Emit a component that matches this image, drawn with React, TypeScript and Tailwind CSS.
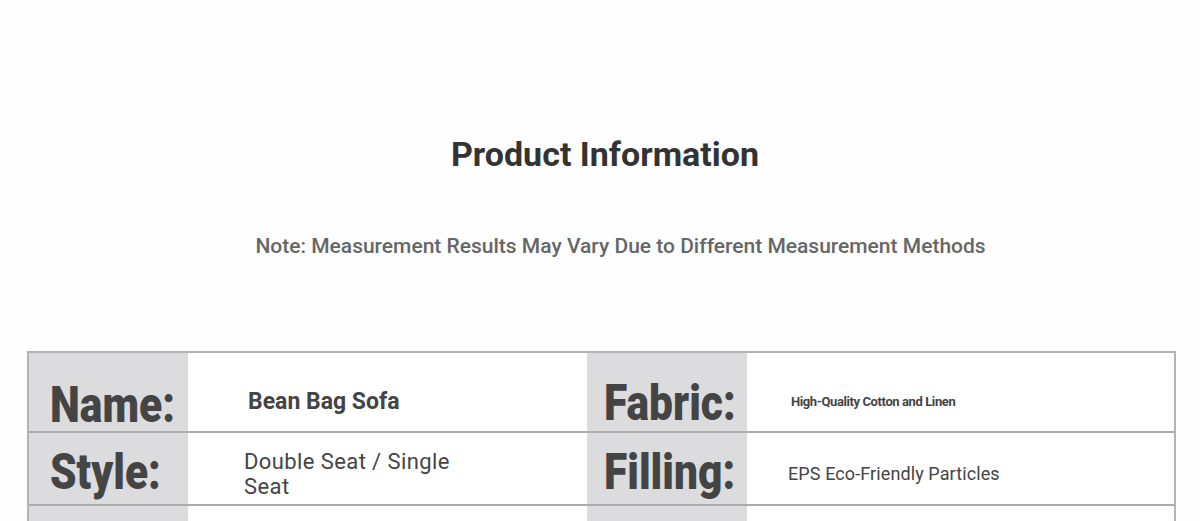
const rows = [
  {
    h: "h-[78px]",
    label1: "Name:",
    value1: <span className="text-[23px] font-bold text-[#444] ml-[60px] mt-[32px] block">Bean Bag Sofa</span>,
    label2: "Fabric:",
    value2: (
      <span className="block ml-[44px] mt-[39px] text-[13px] font-bold text-[#444] tracking-[-0.4px] whitespace-nowrap">
        High-Quality Cotton and Linen
      </span>
    ),
  },
  {
    h: "h-[71px]",
    label1: "Style:",
    value1: (
      <span className="block ml-[56px] mt-[16px] w-[240px] text-[22px] leading-[25px] tracking-[0.4px] text-[#444]">
        Double Seat / Single Seat
      </span>
    ),
    label2: "Filling:",
    value2: (
      <span className="block ml-[41px] mt-[27px] text-[18px] tracking-[0.1px] text-[#444]">
        EPS Eco-Friendly Particles
      </span>
    ),
  },
]

const Label = ({ text, top, left }: { text: string; top: string; left: string }) => (
  <div className="bg-[#dcdbde] h-full">
    <span
      className={`block w-[120px] ${top} ${left} text-[50px] leading-none font-black text-[#444] origin-left scale-x-[0.85] whitespace-nowrap`}
    >
      {text}
    </span>
  </div>
)

export default function App() {
  return (
    <div className="w-full h-[521px] overflow-hidden bg-[#fefefe] font-['Roboto',sans-serif]">
      <div className="flex flex-col items-center">
        <h1 className="mt-[133px] ml-[10px] text-[34px] leading-[42px] font-bold text-[#333]">Product Information</h1>
        <p className="mt-[57px] ml-[41px] text-[21px] leading-[28px] font-medium text-[#666]">
          Note: Measurement Results May Vary Due to Different Measurement Methods
        </p>
      </div>
      <div className="ml-[27px] mt-[91px] w-[1149px] border-x-2 border-t-2 border-[#b4b4b4]">
        {rows.map((r, i) => (
          <div
            key={i}
            className={`grid grid-cols-[159px_399px_160px_1fr] ${r.h} border-b-2 border-[#acacac] box-content`}
          >
            <Label text={r.label1} left="ml-[21px]" top={i === 0 ? "mt-[27px]" : "mt-[14px]"} />
            <div className="bg-white">{r.value1}</div>
            <Label text={r.label2} left="ml-[17px]" top={i === 0 ? "mt-[25px]" : "mt-[14px]"} />
            <div className="bg-white">{r.value2}</div>
          </div>
        ))}
        <div className="grid grid-cols-[159px_399px_160px_1fr] h-[60px]">
          <div className="bg-[#dcdbde]" />
          <div className="bg-white" />
          <div className="bg-[#dcdbde]" />
          <div className="bg-white" />
        </div>
      </div>
    </div>
  )
}
